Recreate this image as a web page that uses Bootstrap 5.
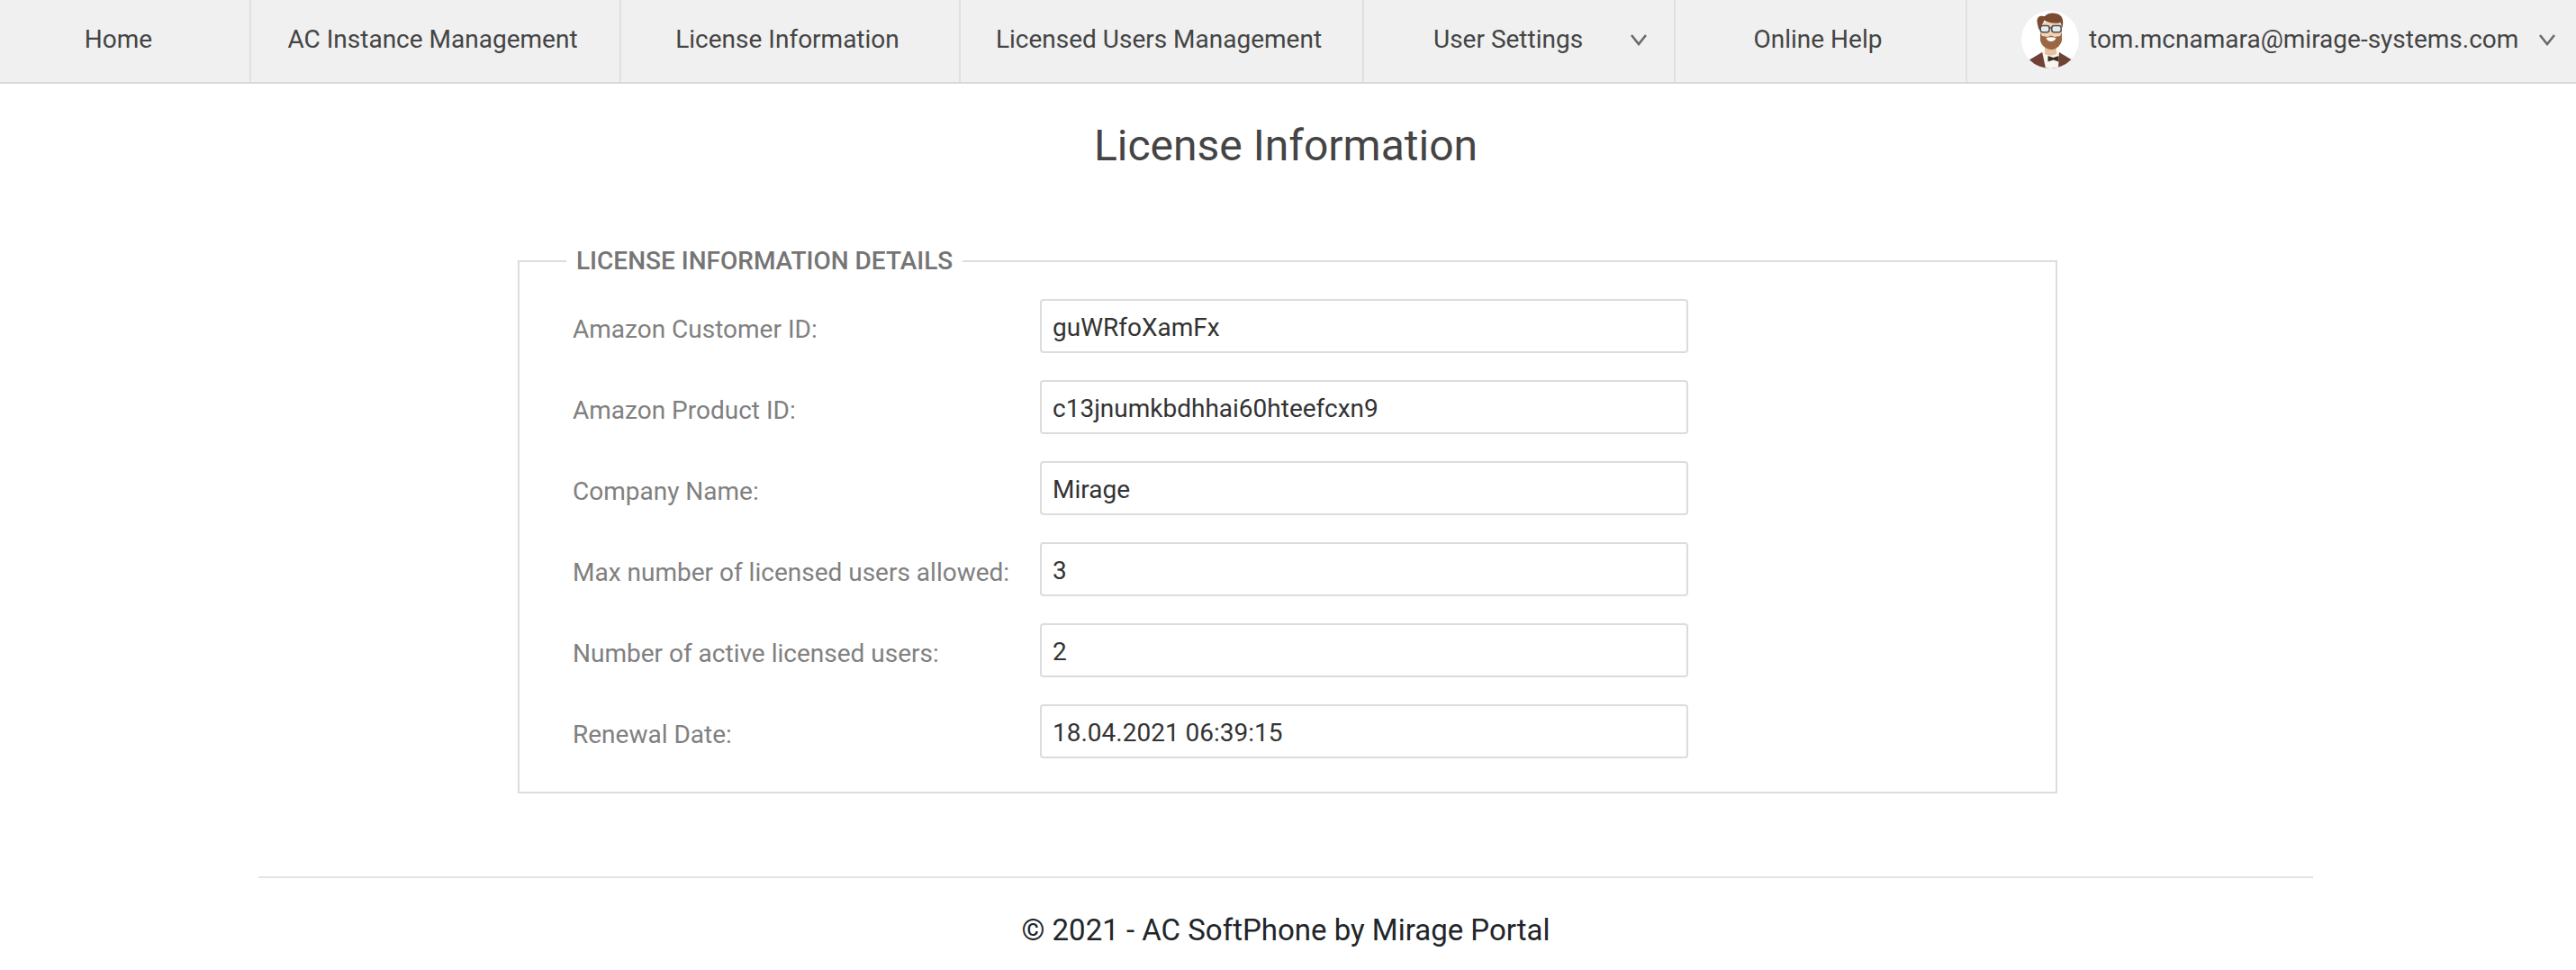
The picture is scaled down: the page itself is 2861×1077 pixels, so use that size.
<!doctype html>
<html lang="en">
<head>
<meta charset="utf-8">
<title>License Information</title>
<link href="https://cdn.jsdelivr.net/npm/bootstrap@5.3.0/dist/css/bootstrap.min.css" rel="stylesheet">
<style>
body{font-family:Roboto,"Liberation Sans",sans-serif;font-size:28px;color:#212529;background:#fff;overflow-x:hidden}
.topbar{height:93px;background:#f0f0f0;border-bottom:2px solid #d9d9d9}
.tab{height:91px;color:#444;font-size:28px;border-right:2px solid #e0e0e0;text-decoration:none;padding-right:6px;padding-bottom:3px;flex:none}
.tab-home{width:279px;padding-right:14px}
.tab-ac{width:411px}
.tab-lic{width:377px}
.tab-users{width:448px}
.tab-settings{width:346px;padding-left:0;padding-right:0}
.tab-help{width:324px}
.tab-user{flex:1 1 auto;border-right:0;padding-left:60px;padding-right:0}
.tab-settings .lbl{margin-left:77px;width:165px}
.chev{width:20px;height:14px;flex:none}
.tab-settings .chev{margin-left:53px}
.tab-user .chev{margin-left:22px}
.avatar{width:64px;height:64px;flex:none;margin-right:11px}
.pagewrap{width:2282px;margin:0 0 0 287px}
.pagetitle{font-size:48px;font-weight:400;color:#444;text-align:center;margin:0;line-height:59px;padding-top:39px}
.infobox{margin:82px 0 0 288px;width:1710px;height:608px;border:2px solid #ddd;padding:0 33px 0 58px;min-width:0}
.infobox legend{float:none;width:auto;font-size:28px;font-weight:500;line-height:33px;color:#757575;text-transform:uppercase;padding:0 11px;margin:-1px 0 0 -6px}
.rows{padding-top:26px;margin-left:1px}
.inforow{height:60px;margin-bottom:30px}
.infolabel{width:519px;color:#808080;font-size:28px;line-height:33px;padding-top:7px;margin:0}
.infovalue{width:720px;height:60px;border:2px solid #dcdcdc;border-radius:4px;font-size:28px;color:#333;padding:3px 12px 0;line-height:33px;background:#fff}
.footrule{margin:92px 0 0;border:0;border-top:2px solid #e3e3e3;opacity:1}
.foot{text-align:center;color:#212529;font-size:33px;line-height:38px;padding-top:39px}
</style>
</head>
<body>
<nav class="topbar d-flex align-items-center">
  <a class="tab tab-home d-flex align-items-center justify-content-center" href="#">Home</a>
  <a class="tab tab-ac d-flex align-items-center justify-content-center" href="#">AC Instance Management</a>
  <a class="tab tab-lic d-flex align-items-center justify-content-center" href="#">License Information</a>
  <a class="tab tab-users d-flex align-items-center justify-content-center" href="#">Licensed Users Management</a>
  <a class="tab tab-settings d-flex align-items-center" href="#"><span class="lbl text-nowrap">User Settings</span>
    <svg class="chev" viewBox="0 0 20 14"><path d="M2 2 L10 12 L18 2" fill="none" stroke="#6a6a6a" stroke-width="2.6"/></svg></a>
  <a class="tab tab-help d-flex align-items-center justify-content-center" href="#">Online Help</a>
  <a class="tab tab-user d-flex align-items-center" href="#">
    <svg class="avatar" viewBox="0 0 64 64">
      <defs><clipPath id="avc"><circle cx="32" cy="32" r="32"/></clipPath></defs>
      <circle cx="32" cy="32" r="32" fill="#fff"/>
      <g clip-path="url(#avc)">
        <path d="M5 64 L8 55 L23 46 L42 46 L57 55 L60 64Z" fill="#6e4234"/>
        <path d="M23 45 L42 45 L41 64 L27 64Z" fill="#f8f5f0"/>
        <path d="M29.5 50 L35.5 52 L41.5 50 L41.5 56.5 L35.5 54.5 L29.5 56.5Z" fill="#3d2f20"/>
        <path d="M26 36 H39 V48 Q32 51 26 48Z" fill="#e9c0a0"/>
        <path d="M21 17 C21 10 45 10 45 17 L45 30 C45 38 39 43 33 43 C27 43 21 38 21 30Z" fill="#f5d2b5"/>
        <path d="M21 24 L23 28 L29 29 L33 27.5 L37 29 L43 28 L45 24 L45 32 C45 37 39 43 33 43 C27 43 21 37 21 32Z" fill="#9a6744"/>
        <path d="M27.5 30 Q33 28.5 38.5 30 Q37 34 33 34 Q29 34 27.5 30Z" fill="#fff"/>
        <path d="M19.5 21 C18 15 16 10 19 7 C21 5 24 6 26 6 C30 1 40 2 43 5 C47 8 46.5 14 45.5 19 L43.5 13 C37 15 29 13 25.5 10.5 C24 14 22 16 21.5 20Z" fill="#7b4b31"/>
        <rect x="21.2" y="16.5" width="9.8" height="7.2" rx="2.4" fill="#e6eaec" stroke="#4b4e50" stroke-width="1.5"/>
        <rect x="33.8" y="16.5" width="10.4" height="7.2" rx="2.4" fill="#e6eaec" stroke="#4b4e50" stroke-width="1.5"/>
        <path d="M31 19 H33.8" stroke="#4b4e50" stroke-width="1.3"/>
      </g>
    </svg>
    <span class="text-nowrap">tom.mcnamara@mirage-systems.com</span>
    <svg class="chev" viewBox="0 0 20 14"><path d="M2 2 L10 12 L18 2" fill="none" stroke="#6a6a6a" stroke-width="2.6"/></svg>
  </a>
</nav>
<main class="pagewrap">
  <h1 class="pagetitle">License Information</h1>
  <fieldset class="infobox">
    <legend>License Information Details</legend>
    <div class="rows">
      <div class="inforow d-flex align-items-center"><label class="infolabel">Amazon Customer ID:</label><input class="infovalue form-control" readonly value="guWRfoXamFx"></div>
      <div class="inforow d-flex align-items-center"><label class="infolabel">Amazon Product ID:</label><input class="infovalue form-control" readonly value="c13jnumkbdhhai60hteefcxn9"></div>
      <div class="inforow d-flex align-items-center"><label class="infolabel">Company Name:</label><input class="infovalue form-control" readonly value="Mirage"></div>
      <div class="inforow d-flex align-items-center"><label class="infolabel">Max number of licensed users allowed:</label><input class="infovalue form-control" readonly value="3"></div>
      <div class="inforow d-flex align-items-center"><label class="infolabel">Number of active licensed users:</label><input class="infovalue form-control" readonly value="2"></div>
      <div class="inforow d-flex align-items-center"><label class="infolabel">Renewal Date:</label><input class="infovalue form-control" readonly value="18.04.2021 06:39:15"></div>
    </div>
  </fieldset>
  <hr class="footrule">
  <footer class="foot">© 2021 - AC SoftPhone by Mirage Portal</footer>
</main>
<script src="https://cdn.jsdelivr.net/npm/bootstrap@5.3.0/dist/js/bootstrap.bundle.min.js"></script>
</body>
</html>
